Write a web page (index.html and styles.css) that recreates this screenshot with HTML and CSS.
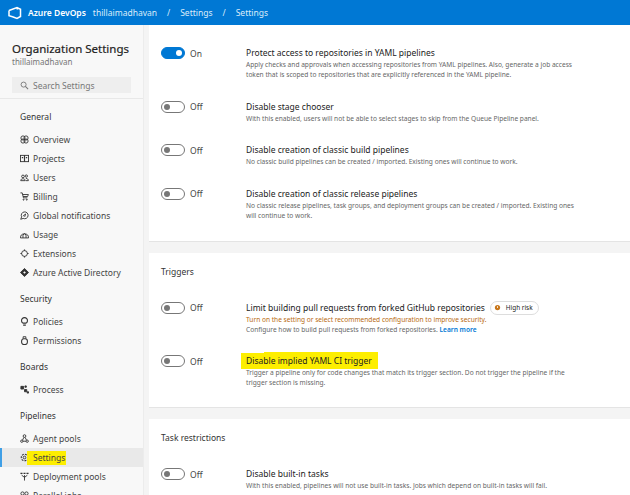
FILE: index.html
```html
<!DOCTYPE html>
<html lang="en">
<head>
    <meta charset="UTF-8">
    <title>Organization Settings - Settings</title>
    <link rel="stylesheet" href="styles.css">
</head>
<body>
    <header class="topbar">
        <svg class="logo" viewBox="0 0 14 14"><path d="M1 4.500 9 1.500l3.500 1.800v7.200L9 12.500l-4.500-1.700M1 4.500v5.300l3.500 1M9 1.500 9.500 3.500" fill="none" stroke="#fff" stroke-width="1.500"/></svg>
        <span class="brand">Azure DevOps</span>
        <span class="crumb">thillaimadhavan</span>
        <span class="sep">/</span>
        <span class="crumb">Settings</span>
        <span class="sep">/</span>
        <span class="crumb">Settings</span>
    </header>

    <div class="layout">
        <aside class="sidebar">
            <div class="org">
                <h1 class="org-title">Organization Settings</h1>
                <div class="org-name">thillaimadhavan</div>
                <div class="search">
                    <svg class="search-icon" viewBox="0 0 10 10"><circle cx="4" cy="4" r="2.800" fill="none" stroke="#777" stroke-width="1"/><path d="M6 6l3 3" stroke="#777" stroke-width="1.200"/></svg>
                    <span>Search Settings</span>
                </div>
            </div>

            <nav class="nav">
                <div class="nav-group">General</div>
                <a class="nav-item"><svg class="nav-icon" viewBox="0 0 10 10"><circle cx="3.300" cy="3.300" r="2.300"/><circle cx="6.700" cy="3.300" r="2.300"/><circle cx="3.300" cy="6.700" r="2.300"/><circle cx="6.700" cy="6.700" r="2.300"/></svg>Overview</a>
                <a class="nav-item"><svg class="nav-icon" viewBox="0 0 10 10"><rect x=".5" y="1.500" width="9" height="7"/><path d="M5 1.500v7M2 4h1.500M6.500 4H8" stroke-width="1.300"/></svg>Projects</a>
                <a class="nav-item"><svg class="nav-icon" viewBox="0 0 10 10"><circle cx="3.300" cy="3.800" r="1.500"/><circle cx="7" cy="3.400" r="1.300"/><path d="M.8 8.500c0-2.800 5-2.800 5 0zM6.500 6c1.800 0 2.800 1 2.800 2.500H6.500"/></svg>Users</a>
                <a class="nav-item"><svg class="nav-icon" viewBox="0 0 10 10"><path d="M.5 1h2l1.300 5.500h4.400M2.800 2.800h6.500L8.500 5H3.400"/><circle cx="4" cy="8.500" r=".6"/><circle cx="7.500" cy="8.500" r=".6"/></svg>Billing</a>
                <a class="nav-item"><svg class="nav-icon" viewBox="0 0 10 10"><path d="M.8 9.200l1-2.700a3.800 3.800 0 1 1 1.700 1.700z"/><path d="M3.200 5.800l3-2.500-1 3.200"/></svg>Global notifications</a>
                <a class="nav-item"><svg class="nav-icon" viewBox="0 0 10 10"><path d="M.5 8.800a4.500 4.500 0 0 1 9 0zM3.300 8.800V5.500L5 4l1.700 1.500v3.300"/></svg>Usage</a>
                <a class="nav-item"><svg class="nav-icon" viewBox="0 0 10 10"><circle cx="5" cy="5" r="3.200"/><path d="M5 .5v1.500M5 8v1.500M.5 5H2M8 5h1.500" stroke-width="1.300"/></svg>Extensions</a>
                <a class="nav-item"><svg class="nav-icon solid" viewBox="0 0 10 10"><path d="M5 .5 9.500 5 5 9.500.5 5z"/><path d="M5 3.500 6.500 5 5 6.500 3.500 5z" fill="#f8f8f8" stroke="none"/></svg>Azure Active Directory</a>

                <div class="nav-group">Security</div>
                <a class="nav-item"><svg class="nav-icon" viewBox="0 0 10 10"><path d="M3.300 6.800a3.300 3.300 0 1 1 3.400 0zM3.500 9h3" stroke-width="1.200"/></svg>Policies</a>
                <a class="nav-item"><svg class="nav-icon" viewBox="0 0 10 10"><rect x="1.800" y="3" width="6.400" height="6.500" rx="2.500" stroke-width="1.200"/><path d="M3.500 3V.8h3V3"/></svg>Permissions</a>

                <div class="nav-group">Boards</div>
                <a class="nav-item"><svg class="nav-icon solid" viewBox="0 0 10 10"><path d="M1 1.500h3v3H1zM5.500 1h1.500v1.500H5.500zM5 5h2.500v2.500H5zM8 7.500h1.500V9H8z"/></svg>Process</a>

                <div class="nav-group">Pipelines</div>
                <a class="nav-item"><svg class="nav-icon" viewBox="0 0 10 10"><circle cx="5" cy="2.300" r="1.500"/><circle cx="2" cy="8" r="1.300"/><circle cx="8" cy="8" r="1.300"/><path d="M4.300 3.800 2.800 6.800M5.700 3.800l1.500 3M3.300 8h3.400"/></svg>Agent pools</a>
                <a class="nav-item active"><svg class="nav-icon" viewBox="0 0 10 10"><circle cx="5" cy="5" r="3.600" stroke-width="1.200" stroke-dasharray="2.200 1.200"/><circle cx="5" cy="5" r="1.500"/></svg><span class="marker">Settings</span></a>
                <a class="nav-item"><svg class="nav-icon" viewBox="0 0 10 10"><path d="M.5 1.500h2.300M3.900 1.500h2.200M7.200 1.500h2.300" stroke-width="1.600"/><path d="M5 3.500V9.500M1.800 3.500 5 6l3.200-2.500"/></svg>Deployment pools</a>
                <a class="nav-item"><svg class="nav-icon" viewBox="0 0 10 10"><circle cx="2.800" cy="2.800" r="1.800"/><circle cx="7.200" cy="2.800" r="1.800"/><path d="M2.800 4.600v4.500M7.200 4.600v4.500"/></svg>Parallel jobs</a>
            </nav>
        </aside>

        <main class="main">
            <section class="card first">
                <div class="row">
                    <label class="toggle on"><span class="track"></span>On</label>
                    <div class="info">
                        <div class="title">Protect access to repositories in YAML pipelines</div>
                        <p class="desc">Apply checks and approvals when accessing repositories from YAML pipelines. Also, generate a job access token that is scoped to repositories that are explicitly referenced in the YAML pipeline.</p>
                    </div>
                </div>
                <div class="row">
                    <label class="toggle"><span class="track"></span>Off</label>
                    <div class="info">
                        <div class="title">Disable stage chooser</div>
                        <p class="desc">With this enabled, users will not be able to select stages to skip from the Queue Pipeline panel.</p>
                    </div>
                </div>
                <div class="row">
                    <label class="toggle"><span class="track"></span>Off</label>
                    <div class="info">
                        <div class="title">Disable creation of classic build pipelines</div>
                        <p class="desc">No classic build pipelines can be created / imported. Existing ones will continue to work.</p>
                    </div>
                </div>
                <div class="row">
                    <label class="toggle"><span class="track"></span>Off</label>
                    <div class="info">
                        <div class="title">Disable creation of classic release pipelines</div>
                        <p class="desc">No classic release pipelines, task groups, and deployment groups can be created / imported. Existing ones will continue to work.</p>
                    </div>
                </div>
            </section>

            <section class="card">
                <h2 class="card-title">Triggers</h2>
                <div class="row">
                    <label class="toggle"><span class="track"></span>Off</label>
                    <div class="info">
                        <div class="title">Limit building pull requests from forked GitHub repositories
                            <span class="risk"><svg viewBox="0 0 8 8"><circle cx="4" cy="4" r="3" fill="#c8761a"/><path d="M4 2.500v2" stroke="#fff"/></svg>High risk</span>
                        </div>
                        <p class="warn">Turn on the setting or select recommended configuration to improve security.</p>
                        <p class="desc">Configure how to build pull requests from forked repositories. <a class="more">Learn more</a></p>
                    </div>
                </div>
                <div class="row">
                    <label class="toggle"><span class="track"></span>Off</label>
                    <div class="info">
                        <div class="title"><span class="marker big">Disable implied YAML CI trigger</span></div>
                        <p class="desc">Trigger a pipeline only for code changes that match its trigger section. Do not trigger the pipeline if the trigger section is missing.</p>
                    </div>
                </div>
            </section>

            <section class="card">
                <h2 class="card-title">Task restrictions</h2>
                <div class="row">
                    <label class="toggle"><span class="track"></span>Off</label>
                    <div class="info">
                        <div class="title">Disable built-in tasks</div>
                        <p class="desc">With this enabled, pipelines will not use built-in tasks. Jobs which depend on built-in tasks will fail.</p>
                    </div>
                </div>
            </section>
        </main>
    </div>
</body>
</html>
```

FILE: styles.css
```css
* {
    box-sizing: border-box;
}

html, body {
    height: 100%;
}

body {
    margin: 0;
    overflow: hidden;
    font-family: "Noto Sans", "Open Sans", sans-serif;
    background: #f4f4f4;
    color: #222;
}

.topbar {
    height: 25px;
    background: #0078d4;
    color: #dcecf9;
    display: flex;
    align-items: center;
    padding-left: 8px;
    font-size: 8.5px;
}

.logo {
    width: 14px;
    height: 14px;
    margin-right: 6px;
}

.brand {
    font-weight: 600;
    color: #fff;
    margin-right: 7px;
}

.sep {
    margin: 0 10px;
}

.layout {
    display: flex;
    height: 470px;
}

.sidebar {
    width: 144px;
    flex: none;
    background: #f8f8f8;
    border-right: 1px solid #ececec;
    overflow: hidden;
}

.org {
    padding: 16px 12px 5px;
    border-bottom: 1px solid #e8e8e8;
}

.org-title {
    margin: 0;
    font-size: 11.5px;
    line-height: 16px;
    font-weight: 400;
    white-space: nowrap;
    color: #222;
    -webkit-text-stroke: .2px #222;
}

.org-name {
    font-size: 8px;
    line-height: 10px;
    color: #777;
}

.search {
    display: flex;
    align-items: center;
    height: 16px;
    margin-top: 10px;
    padding-left: 8px;
    background: #eeeeee;
    font-size: 8.5px;
    color: #777;
}

.search-icon {
    width: 9px;
    height: 9px;
    margin-right: 4px;
}

.nav {
    padding-top: 8px;
}

.nav-group {
    height: 19px;
    line-height: 19px;
    margin-top: 7px;
    margin-bottom: 4px;
    padding-left: 20px;
    font-size: 8.5px;
    color: #333;
}

.nav-group:first-child {
    margin-top: 0;
}

.nav-item {
    display: flex;
    align-items: center;
    height: 19px;
    padding-left: 20px;
    font-size: 8.5px;
    color: #444;
}

.nav-item.active {
    background: #e9e9e9;
    border-left: 2px solid #3f9fe6;
    padding-left: 18px;
}

.nav-icon {
    width: 9px;
    height: 9px;
    margin-right: 4px;
    flex: none;
    fill: none;
    stroke: #333;
    stroke-width: 1;
}

.nav-icon.solid {
    fill: #333;
}

.marker {
    background: #fdee00;
    margin-left: -6px;
    padding: 1px 1px 2px 6px;
}

.main {
    flex: 1;
    padding-left: 5px;
    overflow: hidden;
}

.card {
    background: #fff;
    border-bottom: 1px solid #e4e4e4;
    margin-bottom: 11px;
    padding: 12px 0 20px 12px;
}

.card.first {
    padding-top: 21px;
}

.card + .card {
    padding-bottom: 19px;
}

.card-title {
    margin: 0 0 22px;
    font-size: 8.5px;
    line-height: 14px;
    font-weight: 400;
    color: #333;
}

.row {
    display: flex;
    margin-bottom: 19.5px;
}

.row:last-child {
    margin-bottom: 0;
}

.toggle {
    width: 85px;
    flex: none;
    display: flex;
    align-items: center;
    height: 14px;
    font-size: 8.5px;
    color: #444;
}

.track {
    position: relative;
    width: 24px;
    height: 12px;
    margin-right: 5px;
    border: 1px solid #777;
    border-radius: 6px;
    background: #fff;
}

.track::after {
    content: "";
    position: absolute;
    left: 2px;
    top: 2px;
    width: 6px;
    height: 6px;
    border-radius: 50%;
    background: #777;
}

.toggle.on .track {
    background: #0078d4;
    border-color: #0078d4;
}

.toggle.on .track::after {
    left: auto;
    right: 2px;
    background: #fff;
}

.info {
    width: 330px;
}

.title {
    display: flex;
    align-items: center;
    height: 14px;
    font-size: 8.5px;
    line-height: 14px;
    white-space: nowrap;
    color: #222;
}

.desc, .warn {
    margin: 0;
    font-size: 6.6px;
    line-height: 10px;
    color: #666;
}

.warn {
    color: #b8690f;
}

.more {
    color: #0078d4;
    font-weight: 600;
}

.risk {
    display: inline-flex;
    align-items: center;
    flex: none;
    height: 14px;
    margin-left: 5px;
    padding: 0 5px 0 3px;
    border: 1px solid #ddd;
    border-radius: 7px;
    font-size: 6.4px;
}

.risk svg {
    width: 7px;
    height: 7px;
    margin-right: 5px;
}

.marker.big {
    position: relative;
    margin-left: -5px;
    padding: 1px 6px 1px 5px;
}

/* second stroke of the highlighter, slightly higher */
.marker.big::after {
    content: "";
    position: absolute;
    left: 23px;
    right: 0;
    top: -1px;
    height: 1px;
    background: #fdee00;
}
```
